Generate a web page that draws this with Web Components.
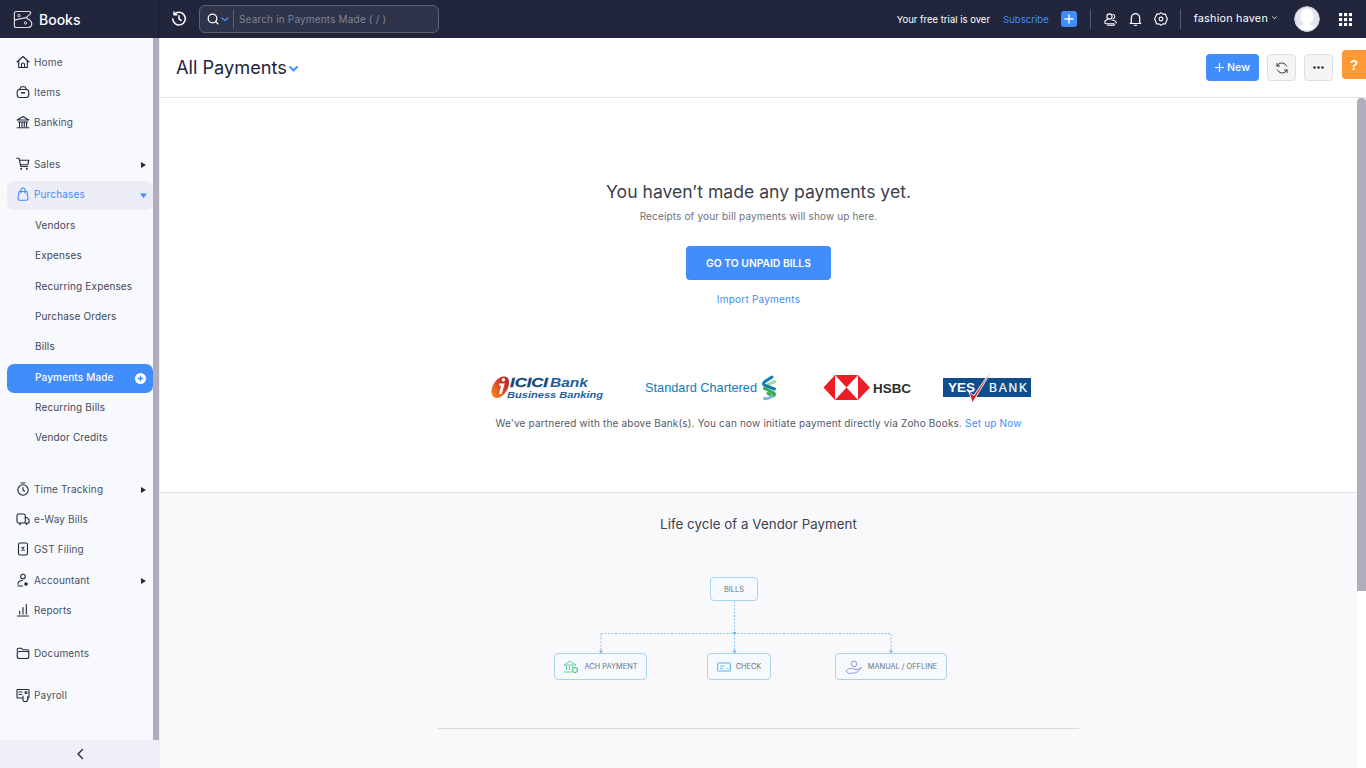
<!DOCTYPE html>
<html><head><meta charset="utf-8"><title>Payments</title>
<style>
html,body{margin:0;height:768px;overflow:hidden;background:#fff;font-family:Inter,"Liberation Sans",sans-serif;color:#21263c}
</style></head><body>
<z-app>
  <z-topbar slot="top"></z-topbar>
  <z-sidebar slot="side">
    <z-nav icon="home">Home</z-nav>
    <z-nav icon="items">Items</z-nav>
    <z-nav icon="bank" gap="11.5">Banking</z-nav>
    <z-nav icon="cart" arrow="right">Sales</z-nav>
    <z-nav icon="bag" arrow="down" state="open">Purchases</z-nav>
    <z-nav sub>Vendors</z-nav>
    <z-nav sub>Expenses</z-nav>
    <z-nav sub>Recurring Expenses</z-nav>
    <z-nav sub>Purchase Orders</z-nav>
    <z-nav sub>Bills</z-nav>
    <z-nav sub state="active">Payments Made</z-nav>
    <z-nav sub>Recurring Bills</z-nav>
    <z-nav sub gap="21">Vendor Credits</z-nav>
    <z-nav icon="timer" arrow="right">Time Tracking</z-nav>
    <z-nav icon="truck">e-Way Bills</z-nav>
    <z-nav icon="gst">GST Filing</z-nav>
    <z-nav icon="acct" arrow="right">Accountant</z-nav>
    <z-nav icon="reports" gap="12.5">Reports</z-nav>
    <z-nav icon="folder" gap="12">Documents</z-nav>
    <z-nav icon="payroll">Payroll</z-nav>
  </z-sidebar>
  <z-main slot="main">
    <z-empty></z-empty>
    <z-lifecycle></z-lifecycle>
  </z-main>
</z-app>
<script>
function def(name, css, html, init){
  customElements.define(name, class extends HTMLElement{
    constructor(){super();const s=this.attachShadow({mode:'open'});s.innerHTML='<style>'+css+'</style>'+(typeof html==='function'?html(this):html);}
    connectedCallback(){if(init)init(this,this.shadowRoot);}
  });
}
const ic=(w,h,body,extra='')=>`<svg width="${w}" height="${h}" viewBox="0 0 ${w} ${h}" fill="none" ${extra}>${body}</svg>`;

def('z-app',`
:host{display:grid;grid-template-columns:160px 1fr;grid-template-rows:38px 730px;width:1366px;height:768px}
::slotted([slot=top]){grid-column:1/3}
`,`<slot name="top"></slot><slot name="side"></slot><slot name="main"></slot>`);

const ST='stroke="#fff" stroke-width="1.5" stroke-linecap="round" stroke-linejoin="round"';
def('z-topbar',`
:host{display:flex;align-items:center;height:38px;background:#21263c;color:#fff;font-size:9.5px}
.brand{width:159px;height:38px;box-sizing:border-box;display:flex;align-items:center;padding-left:13px;gap:6px;border-right:1px solid #171b2d;flex:none;font-size:14px;font-weight:500}
.hist{margin-left:12px;display:flex;width:16px}
.search{margin-left:12px;width:240px;height:28px;box-sizing:border-box;border:1px solid #5e6273;border-radius:6px;background:#2f344a;display:flex;align-items:center;padding-left:7px;color:#7f8395;font-size:10px;letter-spacing:.17px}
.search .sep{width:1px;height:18px;background:#5e6273;margin:0 5px 0 4px}
.right{margin-left:auto;display:flex;align-items:center}
.sub{color:#408dfb;margin-left:13px;letter-spacing:.05px}
.plus{margin-left:12px;width:16px;height:16px;border-radius:3px;background:#408dfb;display:flex;align-items:center;justify-content:center}
.div{width:1px;height:20px;background:#565a6b}
.user{font-size:10.85px;letter-spacing:.2px;margin-left:13px;display:flex;align-items:center;gap:4px;position:relative;top:-1px}
.avatar{margin-left:17px;display:flex}
.grid{margin-left:19px;margin-right:14px;display:flex}
`,`
<div class="brand">${ic(20,19,`<path d="M3 1.500h13.200c1.400 0 2 1.700.9 2.600L13 7.600l3.800 2.600c1.600 1.100 2 2.400 2 3.400 0 2.200-1.700 3.900-3.900 3.900H3c-1 0-1.600-.7-1.600-1.600V3C1.400 2.100 2 1.500 3 1.500z" stroke="#d8dae2" stroke-width="1.200" stroke-linejoin="round"/><path d="M1.800 9.800 13 7.600" stroke="#d8dae2" stroke-width="1.200"/><circle cx="6" cy="5.600" r="1.200" stroke="#d8dae2"/><circle cx="12.500" cy="13" r="1.200" stroke="#d8dae2"/>`)}<span>Books</span></div>
<div class="hist">${ic(16,16,`<path d="M3.400 3.300A6.300 6.300 0 1 1 1.700 8" ${ST}/><path d="M3 .9v2.800h2.800M8 4.700V8l2.200 1.400" ${ST}/>`)}</div>
<div class="search">${ic(12,12,`<circle cx="5.500" cy="5.500" r="4.300" stroke="#fff" stroke-width="1.300"/><path d="m8.700 8.700 2.200 2.200" stroke="#fff" stroke-width="1.300" stroke-linecap="round"/>`)}
${ic(8,5,`<path d="m1 1 3 2.500L7 1" stroke="#408dfb" stroke-width="1.400" stroke-linecap="round" stroke-linejoin="round"/>`,'style="margin-left:2px"')}<span class="sep"></span><span>Search in Payments Made ( / )</span></div>
<div class="right">
<span>Your free trial is over</span><span class="sub">Subscribe</span>
<span class="plus">${ic(10,10,`<path d="M5 1v8M1 5h8" stroke="#fff" stroke-width="1.400" stroke-linecap="round"/>`)}</span>
<span class="div" style="margin-left:13px"></span>
<span style="margin-left:13px;display:flex">${ic(13,13,`<circle cx="5.500" cy="3.500" r="2.600" stroke="#fff" stroke-width="1.100"/><path d="M9 1.300a2.400 2.400 0 0 1 .4 4.500M3.500 6.500C1.700 7 .8 8.200.8 9.500c0 .8.600 1.200 1.500 1.200h7.500c.8 0 .8 1.600 0 1.600H3.500M8 7c2.500.3 4.200 1.600 4.200 3" stroke="#fff" stroke-width="1.100" stroke-linecap="round"/>`)}</span>
<span style="margin-left:12px;display:flex">${ic(13,14,`<path d="M2.300 10.500V5.800a4.200 4.200 0 0 1 8.400 0v4.700l1 1H1.300z" stroke="#fff" stroke-width="1.200" stroke-linejoin="round"/><path d="M5.200 13.300h2.600" stroke="#fff" stroke-width="1.100" stroke-linecap="round"/>`)}</span>
<span style="margin-left:12px;display:flex">${ic(14,14,`<path d="M7 .8l2 1.300 2.300-.1 1.100 2.800 1 2.200-1 2.200-1.100 2.800-2.300-.1-2 1.300-2-1.300-2.300.1-1.100-2.800-1-2.200 1-2.200 1.100-2.800 2.300.1z" stroke="#fff" stroke-width="1.100" stroke-linejoin="round"/><circle cx="7" cy="7" r="1.900" stroke="#fff" stroke-width="1.100"/>`)}</span>
<span class="div" style="margin-left:12px"></span>
<span class="user"><span>fashion haven</span>${ic(5,4,`<path d="m.6.8 1.900 1.900L4.400.8" stroke="#fff" stroke-width=".9" stroke-linecap="round"/>`)}</span>
<span class="avatar">${ic(26,26,`<defs><clipPath id="c"><circle cx="13" cy="13" r="12.300"/></clipPath></defs><circle cx="13" cy="13" r="12.300" fill="#fff"/><g clip-path="url(#c)"><path d="M0 0h26v26H0z" fill="#e4e6f1"/><ellipse cx="13" cy="10.500" rx="6.500" ry="8" fill="#fff"/><path d="M3 26c1-6 5-8 10-8s9 2 10 8z" fill="#fff"/></g><circle cx="13" cy="13" r="12.300" stroke="#c8c9d0" stroke-width="1"/>`)}</span>
<span class="grid">${ic(13,13,[0,5,10].flatMap(y=>[0,5,10].map(x=>`<rect x="${x}" y="${y}" width="3.200" height="3.200" fill="#fff"/>`)).join(''))}</span>
</div>`);

def('z-sidebar',`
:host{display:flex;width:160px;height:730px;box-sizing:border-box;background:#f7f9fd;border-right:1px solid #eceef4;flex-direction:column;overflow:hidden}
.body{flex:1;display:flex;min-height:0}
nav{width:153px;box-sizing:border-box;padding:10.600px 0 0 7px;display:flex;flex-direction:column}
.thumb{width:6px;background:#b1adbd}
footer{height:28px;background:#eeeff7;display:flex;align-items:center;justify-content:center;flex:none}
`,`<div class="body"><nav><slot></slot></nav><div class="thumb"></div></div><footer>${ic(8,12,`<path d="M6.500 1.500 2 6l4.500 4.500" stroke="#21263c" stroke-width="1.400" stroke-linecap="round" stroke-linejoin="round"/>`)}</footer>`);

const S='stroke="currentColor" stroke-width="1.100" stroke-linecap="round" stroke-linejoin="round"';
const NI={
home:`<path d="M1 7 7 1.500 13 7M2.700 5.800V12.500h8.600V5.800" ${S}/><path d="M5.500 12.500V9.500a1.500 1.500 0 0 1 3 0v3" ${S}/>`,
items:`<path d="M3.500 4.500 5 1.800h4l1.500 2.700" ${S}/><rect x="1.200" y="4.500" width="11.600" height="8" rx="2.500" ${S}/><path d="M5 7.800h4" stroke="currentColor" stroke-width="1.500"/>`,
bank:`<path d="M1.200 5 7 1.500 12.800 5zM2.300 7h9.400M3.500 7.500v4M6 7.500v4M8.300 7.500v4M10.600 7.500v4M1.200 12.800h11.600" ${S}/>`,
cart:`<path d="M.8 1.300h2.200l1.800 8.200h6.900M3.400 3.200h9.400l-1 4.500H4.300" ${S}/><circle cx="5.200" cy="11.800" r="1" fill="currentColor"/><circle cx="10.800" cy="11.800" r="1" fill="currentColor"/>`,
bag:`<path d="M3 4.500h8l1 7a1.500 1.500 0 0 1-1.500 1.700h-7A1.500 1.500 0 0 1 2 11.500zM5 6V3a2 2 0 0 1 4 0v3" ${S}/>`,
timer:`<circle cx="7" cy="8" r="5.200" ${S} stroke-width="1.300"/><path d="M5 1h4M7 5.500V8l1.500 1.200" ${S}/>`,
truck:`<rect x="1" y="2" width="8.300" height="9" rx="1.800" ${S}/><path d="M9.300 5.500h1.700l2 2.300v3.200H9.300" ${S}/><circle cx="4" cy="12" r="1" fill="currentColor"/><circle cx="10.500" cy="12" r="1" fill="currentColor"/>`,
gst:`<rect x="2.500" y="1" width="9" height="12" rx="1.500" ${S}/><path d="m6 8.500 2-3.500M5.700 5.500h.6M7.800 8.200h.6" ${S}/>`,
acct:`<circle cx="7" cy="3.500" r="2.300" ${S}/><path d="M6.500 7.500C3.500 7.500 2 9 2 10.800v.4h.1M2 13h4.500" ${S}/><circle cx="10" cy="11" r="1.800" fill="currentColor"/>`,
reports:`<path d="M1.500 13h11M3.700 11V8M7 11V4.500M10.300 11V1.500" ${S} stroke-width="1.300"/>`,
folder:`<path d="M1.200 5V3.500C1.200 2.700 1.800 2.200 2.500 2.200h2.800l1.500 1.500h4.700c.7 0 1.300.5 1.300 1.300V6" ${S}/><rect x="1.200" y="5.500" width="11.600" height="7" rx="2" ${S}/>`,
payroll:`<rect x="1" y="1.500" width="12" height="8.500" rx=".8" ${S}/><path d="M3 4h3M3 6.500h2.500" ${S}/><circle cx="10" cy="4.500" r="1" ${S}/><path d="M7 8v4c0 1 .6 1.500 1.500 1.500h1.500c1 0 1.700-.7 1.700-1.700V8.500" ${S} fill="#f7f9fd"/>`
};
def('z-nav',`
:host{display:flex;align-items:center;box-sizing:border-box;height:29px;margin-bottom:1.350px;width:146px;padding:0 0 3px 9px;border-radius:7px;font-size:10px;letter-spacing:.15px;color:#4a5062;position:relative;flex:none}
.ico{width:14px;height:14px;margin-right:4px;color:#21263c;display:flex}
:host([sub]){padding-left:28px;color:#3f4658}
:host([state=open]){background:#ecedf6;color:#408dfb}
:host([state=open]) .ico{color:#408dfb}
:host([state=active]){background:#408dfb;color:#fff;font-weight:500}
.end{margin-left:auto;display:flex;align-items:center}
.arr{margin-right:7px;position:relative;top:1px}
.add{margin-right:7px;position:relative;top:1.500px}
`,el=>{
 const i=el.getAttribute('icon'),a=el.getAttribute('arrow');
 let end='';
 if(a==='right')end=ic(5,6,`<path d="M0 0 5 3 0 6z" fill="#21263c"/>`,'class="arr"');
 if(a==='down')end=ic(7,5,`<path d="M0 .5h7L3.500 5z" fill="#408dfb"/>`,'class="arr" style="margin-right:6px"');
 if(el.getAttribute('state')==='active')end=ic(11,11,`<circle cx="5.500" cy="5.500" r="5.500" fill="#fff"/><path d="M5.500 2.800v5.400M2.800 5.500h5.400" stroke="#408dfb" stroke-width="1.300"/>`,'class="add"');
 return (i?`<span class="ico">${ic(14,14,NI[i])}</span>`:'')+`<slot></slot><span class="end">${end}</span>`;
},el=>{const g=el.getAttribute('gap');if(g)el.style.marginBottom=(1.35+ +g)+'px';});

def('z-main',`
:host{display:flex;flex-direction:column;position:relative;min-width:0;height:730px;overflow:hidden;background:#fff}
header{height:60px;box-sizing:border-box;border-bottom:1px solid #e3e3e6;display:flex;align-items:center;padding:0 33px 0 16px;flex:none}
h1{font:400 18.200px Inter,sans-serif;margin:-1px 0 0;color:#21263c}
.chev{margin-left:2px;margin-top:3px}
.new{margin-left:auto;height:27px;width:53px;border-radius:4px;background:#408dfb;color:#fff;font-size:10.500px;font-weight:500;display:flex;align-items:center;justify-content:center;gap:3px;letter-spacing:.1px}
.btn{margin-left:8px;width:29px;height:27px;box-sizing:border-box;background:#f5f5f5;border:1px solid #dedede;border-radius:4px;display:flex;align-items:center;justify-content:center}
.help{position:absolute;right:0;top:12px;width:24px;height:29px;background:#ff9933;color:#fff;border-radius:4px 0 0 4px;font:700 14px "Liberation Sans",sans-serif;display:flex;align-items:center;justify-content:center}
.row{display:flex;flex:1;min-height:0}
.content{flex:1;min-width:0;display:flex;flex-direction:column}
.track{width:9px;flex:none;background:#fff}
.thumb{width:9px;height:493px;background:#b1adbd;border-radius:4px 4px 0 0}
`,`<header><h1>All Payments</h1>${ic(9,6,`<path d="m1 1 3.500 3.500L8 1" stroke="#408dfb" stroke-width="1.800" stroke-linecap="round" stroke-linejoin="round"/>`,'class="chev"')}
<span class="new">${ic(9,9,`<path d="M4.500.5v8M.5 4.500h8" stroke="#fff" stroke-width="1.200" stroke-linecap="round"/>`)}<span>New</span></span>
<span class="btn">${ic(12,12,`<path d="M10.500 4A5 5 0 0 0 2 2.800L1 4M1.500 8A5 5 0 0 0 10 9.200L11 8" stroke="#333" stroke-width="1" stroke-linecap="round"/><path d="M1 1.500V4h2.500M11 10.500V8H8.500" stroke="#333" stroke-width="1" stroke-linecap="round" stroke-linejoin="round"/>`)}</span>
<span class="btn">${ic(11,3,`<circle cx="1.500" cy="1.500" r="1.300" fill="#333"/><circle cx="5.500" cy="1.500" r="1.300" fill="#333"/><circle cx="9.500" cy="1.500" r="1.300" fill="#333"/>`)}</span></header>
<span class="help">?</span>
<div class="row"><div class="content"><slot></slot></div><div class="track"><div class="thumb"></div></div></div>`);

def('z-empty',`
:host{display:flex;flex-direction:column;align-items:center;height:395px;box-sizing:border-box;border-bottom:1px solid #e3e3e6;background:#fff;padding-top:83px;flex:none}
h2{font:400 17.600px Inter,sans-serif;color:#3b3f4c;margin:0;line-height:22px}
p{margin:0;font-size:10px;color:#6c707c;letter-spacing:.15px}
.go{margin-top:23px;width:145px;height:34px;box-sizing:border-box;padding-bottom:1px;background:#408dfb;color:#fff;border-radius:4px;font-size:10.300px;font-weight:600;display:flex;align-items:center;justify-content:center}
.imp{margin-top:13px;color:#408dfb;font-size:10px;letter-spacing:.22px;line-height:13px}
.logos{margin-top:66px;margin-left:4px;display:flex;align-items:center;height:32px;width:540px}
.note{margin-top:12px;color:#555966;font-size:10px;letter-spacing:.18px;line-height:14px}
.note a{color:#408dfb}
`,`
<h2>You haven’t made any payments yet.</h2>
<p style="margin-top:7px;line-height:13px">Receipts of your bill payments will show up here.</p>
<div class="go">GO TO UNPAID BILLS</div>
<div class="imp">Import Payments</div>
<div class="logos">
<svg width="540" height="32" viewBox="0 0 540 32">
 <defs><linearGradient id="ic" x1="0" y1="1" x2="1" y2="0"><stop offset="0" stop-color="#f7941d"/><stop offset=".55" stop-color="#d9442a"/><stop offset="1" stop-color="#a3232b"/></linearGradient></defs>
 <g>
  <path d="M14 4.500C8 3.500 1.500 11 .5 18c-.7 5 2 8.500 6 8C12 25.300 17.500 18 18 11.500 18.300 7.500 17 5 14 4.500z" fill="url(#ic)"/>
  <circle cx="12.500" cy="7.800" r="1.700" fill="#fff"/>
  <path d="M8.500 11.500h5.200l-2.800 9.800c-.4 1.200-2.900 1.600-2.800.2l2-7.800H8z" fill="#fff"/>
  <text x="19" y="15.300" font-family="Liberation Sans" font-size="12.500" font-weight="700" font-style="italic" fill="#12467e" textLength="38" lengthAdjust="spacingAndGlyphs" stroke="#12467e" stroke-width=".3">ICICI</text>
  <text x="59" y="15.300" font-family="Liberation Sans" font-size="12.500" font-weight="700" font-style="italic" fill="#1f5f9e" textLength="38" lengthAdjust="spacingAndGlyphs">Bank</text>
  <text x="16" y="26" font-family="Liberation Sans" font-size="9.500" font-weight="700" font-style="italic" fill="#1f5f9e" textLength="96" lengthAdjust="spacingAndGlyphs">Business Banking</text>
 </g>
 <text x="154" y="20" font-family="Liberation Sans" font-size="13" fill="#0f7db5" textLength="112" lengthAdjust="spacingAndGlyphs">Standard Chartered</text>
 <g fill="none" stroke-width="3" stroke-linecap="round" stroke-linejoin="round">
  <path d="M277 12.500 284 9.500" stroke="#a9d8a9"/>
  <path d="M281 5 274 9.500C272 11 272 12.500 274 13.500L283.500 17" stroke="#0f7db5"/>
  <path d="M273.500 16.500 282 20.500C284 21.500 284 23 282 24L277 21.500" stroke="#38a84a"/>
  <path d="M273.500 26.500C276 27 279 26 281 24" stroke="#7ab7de"/>
 </g>
 <path d="M332.500 15.500 344 3h23l12 12.500L367 28h-23z" fill="#fff"/>
 <path d="M332.500 15.500 344 3v25zM379 15.500 367 3v25z" fill="#ee1c25"/>
 <path d="M344 3h23l-11.500 12.500zM344 28h23l-11.500-12.500z" fill="#ee1c25"/>
 <text x="382" y="20.500" font-family="Liberation Sans" font-size="12.500" font-weight="700" fill="#2d2d2d" textLength="38" lengthAdjust="spacingAndGlyphs">HSBC</text>
 <rect x="452" y="6" width="88" height="19" fill="#0e4e8c"/>
 <text x="457" y="20" font-family="Liberation Sans" font-size="12" font-weight="700" fill="#fff" textLength="27" lengthAdjust="spacingAndGlyphs">YES</text>
 <text x="498" y="20" font-family="Liberation Sans" font-size="12" fill="#fff" stroke="#fff" stroke-width=".2" textLength="38" lengthAdjust="spacing">BANK</text>
 <path d="M499.500 0 483 24l-4.500-3.500 3 9.500z" fill="#fff" stroke="#fff" stroke-width="1.500"/>
 <path d="M499.500 0 483 24l-4.500-3.500 3 9.500z" fill="#d9262e"/>
</svg>
</div>
<div class="note">We've partnered with the above Bank(s). You can now initiate payment directly via Zoho Books. <a>Set up Now</a></div>`);

def('z-flow',`
:host{display:block;position:relative;width:420px;height:120px;font-size:7.400px;color:#6e727c}
svg.lines{position:absolute;inset:0}
.n{position:absolute;box-sizing:border-box;border:1.500px solid #a8d2f0;border-radius:4px;background:#f6fafe;display:flex;align-items:center;justify-content:center;gap:5px;white-space:nowrap}
`,`
<svg class="lines" width="420" height="120" viewBox="0 0 420 120" fill="none">
 <path d="M194.500 31v33M61 63.500h290M61 64v18M194.500 64v18M351 64v18" stroke="#8cc3ee" stroke-width="1" stroke-dasharray="2 1.500"/>
 <path d="M192.500 62h4l-2 3zM59 80.500h4l-2 3zM192.500 80.500h4l-2 3zM349 80.500h4l-2 3z" fill="#6db2e6"/>
</svg>
<div class="n" style="left:170px;top:7px;width:48px;height:24px">BILLS</div>
<div class="n" style="left:14px;top:83px;width:93px;height:27px">${ic(16,14,`<path d="M1 5 7 1.200 13 5zM3.500 6v4M6.500 6v4M9.500 6v2M1 12h8" stroke="#49c47f" stroke-width=".8"/><circle cx="12" cy="10" r="2.500" stroke="#35b46e" stroke-width="1"/>`)}<span>ACH PAYMENT</span></div>
<div class="n" style="left:167px;top:83px;width:64px;height:27px">${ic(14,10,`<rect x=".6" y="1" width="12.800" height="8" rx="1" stroke="#52b2e8" stroke-width="1"/><path d="M3 4h5M3 6.500h3M10 6.500h1.500" stroke="#52b2e8" stroke-width=".8"/>`)}<span>CHECK</span></div>
<div class="n" style="left:295px;top:83px;width:112px;height:27px">${ic(18,14,`<circle cx="9" cy="3.800" r="2.800" stroke="#8a7cc9" stroke-width=".8"/><path d="M1 11l3-2.500h3.500l2 1h3.500l3.500-2-3 3.500-3 2H6L3.500 13.500z" stroke="#8a7cc9" stroke-width=".8" stroke-linejoin="round"/>`)}<span>MANUAL / OFFLINE</span></div>`);

def('z-lifecycle',`
:host{display:flex;flex-direction:column;align-items:center;flex:1;background:#f9f9fc;padding-top:23px;box-sizing:border-box}
h3{font:400 13.300px Inter,sans-serif;color:#3b3f4c;margin:0;line-height:17px;letter-spacing:.05px}
z-flow{margin-top:37px;margin-left:-17px}
hr{margin:38px 0 0;border:0;border-top:1px solid #d9d9de;width:641px}
`,`<h3>Life cycle of a Vendor Payment</h3><z-flow></z-flow><hr>`);
</script>
</body></html>
